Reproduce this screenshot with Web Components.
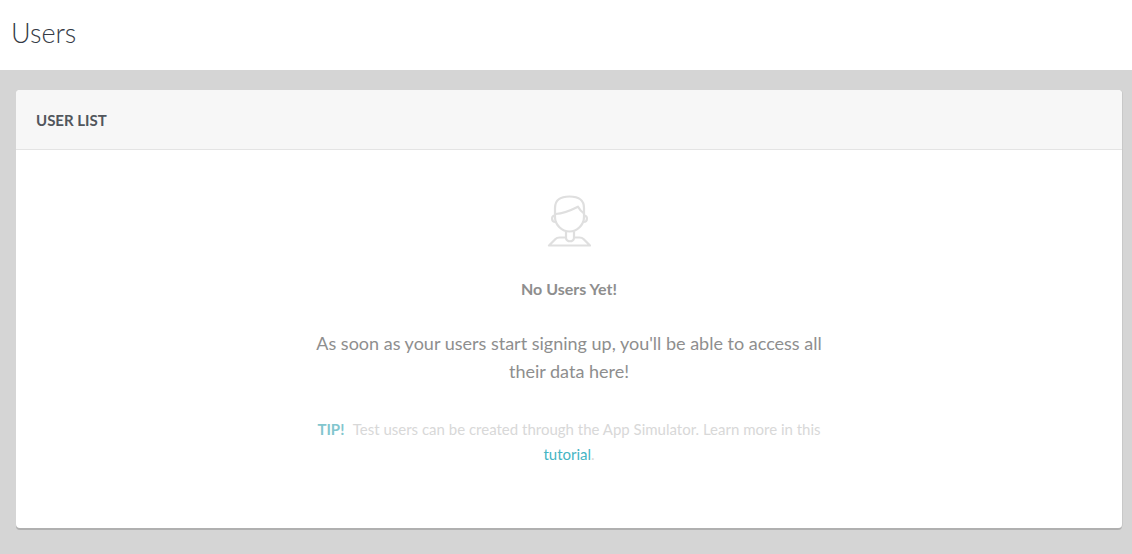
<!DOCTYPE html>
<html lang="en">
<head>
<meta charset="utf-8">
<meta name="viewport" content="width=device-width, initial-scale=1">
<title>Users</title>
<style>
  body { margin: 0; background: #d5d5d5; font-family: Lato, "Open Sans", sans-serif; }
</style>
</head>
<body>
<users-page></users-page>

<script>
class PageHeader extends HTMLElement {
  constructor() {
    super();
    this.attachShadow({ mode: "open" }).innerHTML = `
      <style>
        :host { display: block; background: #fff; color: #343a45; padding: 15px 11px 19px; }
        h1 { margin: 0; font-size: 27px; line-height: 36px; font-weight: 300; }
      </style>
      <h1><slot></slot></h1>`;
  }
}
customElements.define("page-header", PageHeader);

class PanelCard extends HTMLElement {
  constructor() {
    super();
    this.attachShadow({ mode: "open" }).innerHTML = `
      <style>
        :host { display: block; }
        section { background: #fff; border-radius: 4px; box-shadow: 1px 0 0 #c8c8c8, 0 2px 0 #b0b0b0; }
        h2 { margin: 0; padding: 18px 20px 17px; background: #f7f7f7; border-bottom: 1px solid #e4e4e4;
             border-radius: 4px 4px 0 0; color: #51565c; font-size: 15px; line-height: 24px; font-weight: 700; }
      </style>
      <section aria-labelledby="title">
        <h2 id="title"><slot name="title"></slot></h2>
        <slot></slot>
      </section>`;
  }
}
customElements.define("panel-card", PanelCard);

class UserIcon extends HTMLElement {
  constructor() {
    super();
    this.attachShadow({ mode: "open" }).innerHTML = `
      <style>
        :host { display: block; color: #dfdfdf; }
        svg { display: block; }
      </style>
      <svg width="44" height="54" viewBox="0 0 44 54" fill="none" stroke="currentColor" stroke-width="2.200" stroke-linejoin="round" stroke-linecap="round" aria-hidden="true">
        <path d="M8 19V14C8 6 13 2.500 22.500 2.500C32 2.500 37 6 37 14V23C37 31 30 37.500 22.500 37.500C15 37.500 8 31 8 23Z"/>
        <path d="M8.500 20C16.500 19.500 24.500 16 31 12.700C32.500 15.500 34.500 17.500 37 19.500"/>
        <path d="M8 21.500C4 21.500 4 28 8.500 28M37 21.500C41 21.500 41 28 36.500 28"/>
        <path d="M19 38V43.500C19 48.500 27 48.500 27 43.500V38"/>
        <path d="M19 43.500H12.500C10.500 43.500 9.500 44 8.500 45L2 51.500H43L36.500 45C35.500 44 34.500 43.500 32.500 43.500H27"/>
      </svg>`;
  }
}
customElements.define("user-icon", UserIcon);

class EmptyState extends HTMLElement {
  constructor() {
    super();
    this.attachShadow({ mode: "open" }).innerHTML = `
      <style>
        :host { display: flex; flex-direction: column; align-items: center; text-align: center; padding: 44px 20px 61px; }
        h3 { margin: 28px 0 27px; color: #8e8e8e; font-size: 16px; line-height: 26px; font-weight: 700; }
        p { margin: 0; max-width: 532px; }
        .message { color: #8e8e8e; font-size: 18px; line-height: 28px; }
        .tip { margin-top: 32px; color: #d8d8d8; font-size: 15px; line-height: 25px; }
      </style>
      <user-icon></user-icon>
      <h3><slot name="heading"></slot></h3>
      <p class="message"><slot name="message"></slot></p>
      <p class="tip"><slot name="tip"></slot></p>`;
  }
}
customElements.define("empty-state", EmptyState);

class UsersPage extends HTMLElement {
  constructor() {
    super();
    this.attachShadow({ mode: "open" }).innerHTML = `
      <style>
        :host { display: block; }
        main { padding: 20px 10px 24px 16px; }
        strong { margin-right: 5px; color: #82c6ce; font-weight: 700; }
        a { color: #45b5c4; text-decoration: none; }
      </style>
      <page-header>Users</page-header>
      <main>
        <panel-card>
          <span slot="title">USER LIST</span>
          <empty-state>
            <span slot="heading">No Users Yet!</span>
            <span slot="message">As soon as your users start signing up, you'll be able to access all their data here!</span>
            <span slot="tip"><strong>TIP!</strong> Test users can be created through the App Simulator. Learn more in this <a href="#tutorial">tutorial</a>.</span>
          </empty-state>
        </panel-card>
      </main>`;
  }
}
customElements.define("users-page", UsersPage);
</script>
</body>
</html>
